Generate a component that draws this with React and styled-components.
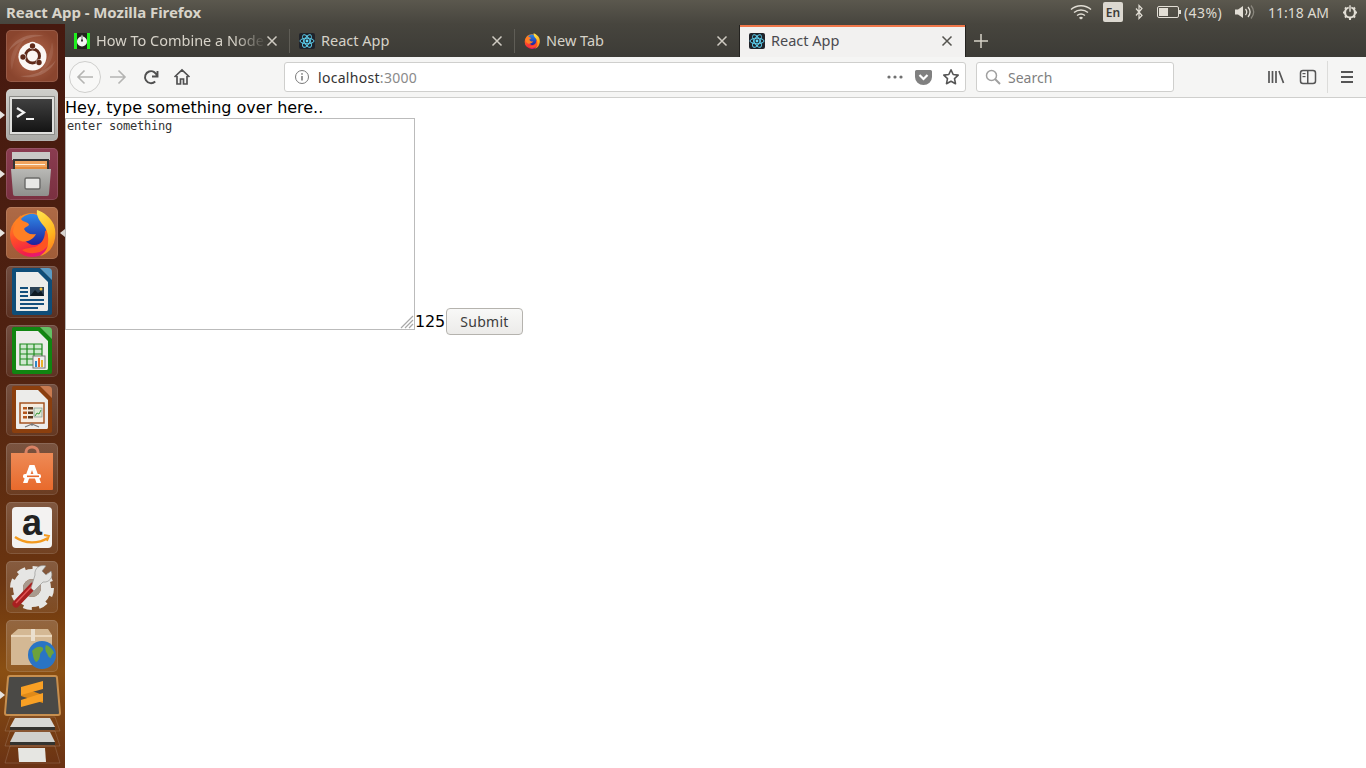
import React from "react";
import styled, { createGlobalStyle } from "styled-components";

const Global = createGlobalStyle`
  html, body { margin: 0; padding: 0; height: 100%; background: #fff; overflow: hidden; }
  #root { height: 768px; }
`;
const UI = `"Noto Sans", "Open Sans", sans-serif`;

const Screen = styled.div`
  width: 1366px; height: 768px; display: flex; flex-direction: column; overflow: hidden;
`;
const Panel = styled.header`
  height: 24px; flex: none; display: flex; align-items: center; justify-content: space-between;
  background: linear-gradient(#5b584e, #47453e);
  font-family: ${UI}; color: #dfdbd2;
`;
const WindowTitle = styled.div`
  margin-left: 6px; font-size: 15px; font-weight: 700; letter-spacing: -0.05px; color: #d8d4ca; white-space: nowrap;
`;
const Tray = styled.div`
  display: flex; align-items: center; height: 24px; font-size: 14px; color: #dfdbd2;
`;
const Glyph = styled.svg`
  display: block; flex: none; margin-left: ${p => p.$ml || 0}px; margin-right: ${p => p.$mr || 0}px;
`;
const LangBox = styled.div`
  width: 20px; height: 20px; margin-left: 11px; border-radius: 2px; background: #dcd8d0; color: #3c3b37;
  font-size: 12px; font-weight: 600; display: flex; align-items: center; justify-content: center;
`;
const TrayText = styled.span`
  margin-left: ${p => p.$ml}px; white-space: nowrap; letter-spacing: ${p => p.$ls || 0}px; width: ${p => p.$w}px;
`;
const Body = styled.div`
  flex: 1; display: flex; min-height: 0;
`;
const Dock = styled.nav`
  width: 65px; flex: none; position: relative; display: flex; flex-direction: column; align-items: flex-start;
  gap: 7px; padding: 6px 0 0 6px; box-sizing: border-box; overflow: hidden;
  background: linear-gradient(#46190f 0%, #4f2211 45%, #6b3510 75%, #8a4f12 87%, #6a3214 100%);
`;
const Tile = styled.div`
  width: 52px; height: 52px; flex: none; position: relative; border-radius: 5px; box-sizing: border-box;
  background: ${p => p.$bg || "linear-gradient(rgba(255,255,255,.2), rgba(255,255,255,.07))"};
  box-shadow: inset 0 0 0 1px rgba(255,255,255,.12);
  & > svg { display: block; }
`;
const FoxBox = styled.div`
  padding: 2px;
`;
const Pip = styled.i`
  position: absolute; top: 50%; margin-top: -4px; width: 0; height: 0;
  border-top: 4px solid transparent; border-bottom: 4px solid transparent;
  ${p => p.$right
    ? "right: -7px; border-right: 5px solid #d8d4d0;"
    : "left: -6px; border-left: 5px solid #e8e4e0;"}
`;
const FoldPip = styled(Pip)`
  top: 671px; left: 0;
`;
const DockFold = styled.svg`
  display: block; position: absolute; left: 0; top: 651px;
`;
const Browser = styled.main`
  flex: 1; min-width: 0; display: flex; flex-direction: column;
`;
const TabStrip = styled.div`
  height: 33px; flex: none; display: flex; align-items: stretch;
  background: linear-gradient(#47453e, #3c3b36);
  font-family: ${UI};
`;
const Tab = styled.div`
  width: 225px; flex: none; box-sizing: border-box; display: flex; align-items: center; padding: 1px 12px 0 9px;
  position: relative; font-size: 14.5px;
  ${p => p.$active
    ? "background:#f2f1f0;color:#4a4a4f;border-top:2px solid #f0774a;box-shadow:-1px 0 0 #23221f,1px 0 0 #23221f;margin-top:1px;padding-top:0;padding-bottom:2px;"
    : "color:#d6d2c8;"}
  ${p => p.$sep && `&::after{content:"";position:absolute;right:0;top:5px;bottom:4px;width:1px;background:#5f5d56;}`}
`;
const Favicon = styled.svg`
  width: 16px; height: 16px; flex: none; display: block;
`;
const TabTitle = styled.span`
  flex: 1; min-width: 0; margin-left: 6px; padding-bottom: 2px; white-space: nowrap; overflow: hidden;
  ${p => p.$fade && "-webkit-mask-image: linear-gradient(90deg,#000 82%,transparent 100%); mask-image: linear-gradient(90deg,#000 82%,transparent 100%);"}
`;
const CloseIcon = styled.svg`
  width: 12px; height: 12px; flex: none; display: block;
`;
const NewTab = styled.div`
  width: 32px; display: flex; align-items: center; justify-content: center;
`;
const NavBar = styled.div`
  height: 41px; flex: none; box-sizing: border-box; display: flex; align-items: center;
  background: #f5f5f4; border-bottom: 1px solid #cfcfcd; font-family: ${UI};
`;
const BackCircle = styled.div`
  width: 32px; height: 32px; flex: none; margin-left: 4px; border-radius: 50%; box-sizing: border-box;
  border: 1px solid #cfcfcd; background: #f8f8f7; display: flex; align-items: center; justify-content: center;
`;
const NavBtn = styled.svg`
  width: 18px; height: 18px; flex: none; display: block; margin-left: ${p => p.$ml}px;
`;
const Field = styled.div`
  height: 30px; flex: none; box-sizing: border-box; background: #fff; border: 1px solid #cfcfcd; border-radius: 3px;
  display: flex; align-items: center; font-size: 14px; padding-right: ${p => p.$pr || 0}px;
  width: ${p => p.$w}px; margin-left: ${p => p.$ml}px;
`;
const UrlText = styled.span`
  margin-left: 8px; color: #333; flex: 1; letter-spacing: 0.3px;
  & b { font-weight: 400; color: #8a8a8a; }
`;
const SearchText = styled.span`
  margin-left: 7px; color: #7f7f7f;
`;
const VSep = styled.div`
  width: 1px; height: 32px; flex: none; background: #dcdcda; margin-left: ${p => p.$ml}px;
`;
const Page = styled.div`
  flex: 1; background: #fff; color: #000; font-family: "DejaVu Sans", sans-serif; font-size: 16px;
`;
const Heading = styled.div`
  height: 20px; line-height: 19px; white-space: nowrap; letter-spacing: -0.03px;
`;
const FormRow = styled.div`
  display: flex; align-items: flex-start; height: 220px;
`;
const NoteWrap = styled.div`
  position: relative; width: 350px; height: 212px; flex: none;
`;
const Note = styled.textarea`
  display: block; width: 100%; height: 100%; box-sizing: border-box; margin: 0; padding: 0 1px 1px;
  border: 1px solid #bbb; resize: none; outline: none; background: #fff; color: #333;
  font-family: "DejaVu Sans Mono", monospace; font-size: 12px; letter-spacing: -0.22px; line-height: 14px;
`;
const Grip = styled.svg`
  position: absolute; right: 1px; bottom: 1px; display: block;
`;
const Count = styled.span`
  margin: 194px 0 0 0; line-height: 19px; letter-spacing: -0.2px;
`;
const Submit = styled.button`
  width: 77px; height: 27px; margin: 190px 0 0 1px; padding: 0; box-sizing: border-box;
  border: 1px solid #b5b3ae; border-radius: 4px; background: linear-gradient(#f8f8f7, #ecebe9);
  color: #3c3c3c; font-family: ${UI}; font-size: 14px; letter-spacing: 0.3px;
`;

const Close = ({ c }) => (
  <CloseIcon viewBox="0 0 12 12"><path d="M1.5 1.5l9 9M10.5 1.5l-9 9" stroke={c} strokeWidth="1.5" fill="none" /></CloseIcon>
);
const ReactFav = () => (
  <Favicon viewBox="0 0 16 16">
    <rect width="16" height="16" rx="2" fill="#20232a" />
    <g fill="none" stroke="#61dafb" strokeWidth="0.9">
      <ellipse cx="8" cy="8" rx="7" ry="2.8" />
      <ellipse cx="8" cy="8" rx="7" ry="2.8" transform="rotate(60 8 8)" />
      <ellipse cx="8" cy="8" rx="7" ry="2.8" transform="rotate(120 8 8)" />
    </g>
    <circle cx="8" cy="8" r="1.4" fill="#61dafb" />
  </Favicon>
);
const FoxGlyph = ({ s = 16 }) => (
  <Glyph width={s} height={s} viewBox="0 0 48 48">
    <defs>
      <linearGradient id={`fb${s}`} x1="0.2" y1="0" x2="0.6" y2="1">
        <stop offset="0" stopColor="#ff9a1e" /><stop offset=".5" stopColor="#ff4a2a" /><stop offset=".85" stopColor="#f01f4a" /><stop offset="1" stopColor="#e51580" />
      </linearGradient>
      <linearGradient id={`fg${s}`} x1="0.5" y1="0" x2="0.5" y2="1">
        <stop offset="0" stopColor="#2f8ae8" /><stop offset="1" stopColor="#1d219c" />
      </linearGradient>
      <linearGradient id={`ft${s}`} x1="0.3" y1="0" x2="0.6" y2="1">
        <stop offset="0" stopColor="#ffe04a" /><stop offset=".6" stopColor="#ffb41e" /><stop offset="1" stopColor="#ff7a1e" />
      </linearGradient>
    </defs>
    <circle cx="24" cy="26" r="22" fill={`url(#fb${s})`} />
    <path d="M9 18C11 9 19 4 26 5c7 1 12 8 12 16s-4 15-12 15c-7 0-14-8-17-18z" fill={`url(#fg${s})`} />
    <path d="M5 22C7 13 10 9 13 6c-1 3 0 5 2 6 3 1 6 2 6 4-2 2-4 2-5 4 2 4 6 6 12 5-3 6-10 9-15 7-5-2-8-6-8-10z" fill="#ff7f24" />
    <path d="M14 41c7 5 18 4 24-2 5-5 7-12 6-18l-7 1c0 8-4 14-10 16-5 1-9 1-13 3z" fill="#ff5a1e" opacity=".9" />
    <path d="M29 1c7 2 14 8 17 15 3 9 1 19-4 25-3 3-6 5-10 6 4-3 8-7 8-13 1-8-1-14-5-18-3-4-7-9-6-15z" fill={`url(#ft${s})`} />
  </Glyph>
);
const PowerFav = () => (
  <Favicon viewBox="0 0 16 16">
    <rect width="16" height="16" fill="#23221e" />
    <rect x="0" width="3" height="16" fill="#1fef1f" /><rect x="13" width="3" height="16" fill="#1fef1f" />
    <circle cx="8" cy="8.5" r="5" fill="#f4f4f4" />
    <rect x="7" y="1.5" width="2" height="7" fill="#333" />
    <rect x="7.4" y="2.5" width="1.2" height="4" fill="#fff" />
  </Favicon>
);

const DocIcon = ({ edge, corner, children }) => (
  <svg width="52" height="52" viewBox="0 0 52 52">
    <path d="M8 2h26l12 12v33a2 2 0 0 1-2 2H8a2 2 0 0 1-2-2V4a2 2 0 0 1 2-2z" fill={edge} />
    <path d="M34 2h8a4 4 0 0 1 4 4v8z" fill={corner} />
    <path d="M10 6h22l10 10v27a2 2 0 0 1-1 2H11a1 1 0 0 1-1-1z" fill="#ececea" />
    {children}
  </svg>
);

const DockItems = () => (
  <>
    <Tile $bg="radial-gradient(circle at 50% 50%, #b56a4e, #8a452e 75%)">
      <svg width="52" height="52" viewBox="0 0 52 52">
        <path d="M2 22C8 8 24 2 38 6 26 6 12 10 2 22zM50 30C44 44 28 50 14 46 26 46 40 42 50 30z" fill="#fff" opacity=".14" />
        <path d="M6 40C2 28 8 14 20 8 12 16 8 28 6 40zM46 12c4 12-2 26-14 32 8-8 12-20 14-32z" fill="#fff" opacity=".08" />
        <circle cx="26.500" cy="26.500" r="14" fill="#fbf7f4" />
        <circle cx="26.500" cy="26" r="7" fill="none" stroke="#5f2a1a" strokeWidth="3" />
        <circle cx="26.500" cy="15.500" r="3.800" fill="#fbf7f4" /><circle cx="26.500" cy="16" r="2.700" fill="#5f2a1a" />
        <circle cx="16.500" cy="27" r="3.800" fill="#fbf7f4" /><circle cx="17" cy="27" r="2.700" fill="#5f2a1a" />
        <circle cx="33.500" cy="33" r="3.800" fill="#fbf7f4" /><circle cx="33" cy="32.500" r="2.700" fill="#5f2a1a" />
      </svg>
    </Tile>
    <Tile $bg="linear-gradient(#cfcfcb, #a9a9a5)">
      <svg width="52" height="52" viewBox="0 0 52 52">
        <defs><linearGradient id="term" x1="0" y1="0" x2="0" y2="1"><stop offset="0" stopColor="#404040" /><stop offset="1" stopColor="#141414" /></linearGradient></defs>
        <rect x="3" y="7" width="46" height="39" rx="1" fill="#8c8c88" />
        <rect x="4" y="8" width="44" height="37" fill="#dfdfdc" />
        <rect x="6" y="10" width="40" height="33" fill="url(#term)" />
        <path d="M11 19l7 4.500-7 4.500" fill="none" stroke="#f2f2f2" strokeWidth="2.200" />
        <rect x="20" y="29" width="8" height="2" fill="#f2f2f2" />
      </svg>
      <Pip />
    </Tile>
    <Tile $bg="linear-gradient(#8a3c50, #7a3040)">
      <svg width="52" height="52" viewBox="0 0 52 52">
        <defs><linearGradient id="cab" x1="0" y1="0" x2="0" y2="1"><stop offset="0" stopColor="#b9b9b6" /><stop offset="1" stopColor="#8f8f8c" /></linearGradient></defs>
        <path d="M6 4h38v8H6z" fill="#c9c9c6" />
        <rect x="7" y="11" width="36" height="10" fill="#333" />
        <rect x="9" y="13" width="32" height="7" fill="#f0a35e" />
        <rect x="9" y="16" width="30" height="1" fill="#fff2e0" />
        <rect x="9" y="19" width="32" height="2" fill="#e58a3a" />
        <path d="M5 21h40l-2 25a2 2 0 0 1-2 2H9a2 2 0 0 1-2-2z" fill="url(#cab)" />
        <rect x="19" y="30" width="15" height="11" rx="1.500" fill="#e8e8e6" stroke="#6a6a68" strokeWidth="1.400" />
      </svg>
      <Pip />
    </Tile>
    <Tile $bg="linear-gradient(#ae6a46, #a05c38)">
      <FoxBox><FoxGlyph s={48} /></FoxBox>
      <Pip /><Pip $right />
    </Tile>
    <Tile>
      <DocIcon edge="#0f4d78" corner="#5b9bc4">
        <rect x="14" y="21" width="8" height="2" fill="#134f7c" /><rect x="14" y="25" width="8" height="2" fill="#134f7c" /><rect x="14" y="29" width="8" height="2" fill="#134f7c" />
        <rect x="14" y="33" width="24" height="2" fill="#134f7c" /><rect x="14" y="37" width="24" height="2" fill="#134f7c" /><rect x="14" y="41" width="18" height="2" fill="#134f7c" />
        <rect x="24" y="21" width="14" height="9" fill="#2d4255" /><path d="M24 30l5-6 3 3 3-2 3 5z" fill="#0e1a24" /><circle cx="35" cy="23" r="1.500" fill="#f4c040" />
      </DocIcon>
    </Tile>
    <Tile>
      <DocIcon edge="#118511" corner="#63c163">
        <path d="M14 19h22v21H14zM14 24h22M14 29h22M14 34h22M21 19v21M28 19v21" fill="#cfe8cf" stroke="#1d8a1d" strokeWidth="1.200" />
        <rect x="27" y="31" width="12" height="12" fill="#efefef" stroke="#777" />
        <rect x="29" y="36" width="2" height="6" fill="#2f86c8" /><rect x="32" y="33" width="2" height="9" fill="#e8662c" /><rect x="35" y="35" width="2" height="7" fill="#e8b22c" />
      </DocIcon>
    </Tile>
    <Tile>
      <DocIcon edge="#8b3f0e" corner="#c97b50">
        <rect x="14" y="19" width="24" height="20" fill="#f6ecdf" stroke="#a04a14" strokeWidth="1.400" />
        <rect x="17" y="23" width="4" height="2.500" fill="#b5571c" /><rect x="17" y="27.500" width="4" height="2.500" fill="#b5571c" /><rect x="17" y="32" width="4" height="2.500" fill="#b5571c" />
        <rect x="22" y="23" width="5" height="2.500" fill="#5a3a20" /><rect x="22" y="27.500" width="5" height="2.500" fill="#5a3a20" /><rect x="22" y="32" width="5" height="2.500" fill="#5a3a20" />
        <rect x="28" y="24" width="8" height="9" fill="#dfe9d4" stroke="#688" strokeWidth=".6" /><path d="M29 32l2-3 2 1 2-4" stroke="#3a9a3a" fill="none" />
        <path d="M26 39v3M26 40l-7 3M26 40l7 3" stroke="#777" strokeWidth="1.200" />
      </DocIcon>
    </Tile>
    <Tile>
      <svg width="52" height="52" viewBox="0 0 52 52">
        <defs><linearGradient id="bag" x1="0" y1="0" x2="0" y2="1"><stop offset="0" stopColor="#ee8a56" /><stop offset="1" stopColor="#e86a2c" /></linearGradient></defs>
        <path d="M20 17V9a6 5 0 0 1 12 0v8" fill="none" stroke="#d98264" strokeWidth="3" />
        <path d="M5 10h42v36a1 1 0 0 1-1 1H6a1 1 0 0 1-1-1z" fill="url(#bag)" />
        <path d="M23.500 22h5l6.500 18h-4.500l-4.500-13-4.500 13H17z" fill="#fff" />
        <rect x="17" y="31" width="18" height="4.500" rx="2" fill="#fff" /><rect x="21" y="32.500" width="12" height="1.600" fill="#e86a2c" />
      </svg>
    </Tile>
    <Tile>
      <svg width="52" height="52" viewBox="0 0 52 52">
        <rect x="6" y="5" width="40" height="41" rx="4" fill="#f3f2f1" />
        <text x="26" y="33" textAnchor="middle" fontFamily="Liberation Sans" fontWeight="700" fontSize="36" fill="#222">a</text>
        <path d="M9 35c10 7 23 7 33 1" fill="none" stroke="#f39a1e" strokeWidth="2.400" />
        <path d="M38 33l5 1-2 5" fill="none" stroke="#f39a1e" strokeWidth="1.800" />
      </svg>
    </Tile>
    <Tile>
      <svg width="52" height="52" viewBox="0 0 52 52">
        <circle cx="26" cy="27" r="19" fill="none" stroke="#e6e6e4" strokeWidth="6" strokeDasharray="8 6.920" />
        <circle cx="26" cy="27" r="14" fill="none" stroke="#e6e6e4" strokeWidth="10" />
        <circle cx="26" cy="27" r="9" fill="#a99a8e" />
        <path d="M10 43L27 25" stroke="#a82020" strokeWidth="7" strokeLinecap="round" />
        <path d="M10 42L27 24" stroke="#e05555" strokeWidth="1.500" />
        <path d="M25 27l3 3 9-9c6 1 11-5 8-11l-5 4-4-4 4-5c-7-2-12 3-11 9z" fill="#e2e2e0" stroke="#8a8a88" strokeWidth=".6" />
      </svg>
    </Tile>
    <Tile>
      <svg width="52" height="52" viewBox="0 0 52 52">
        <path d="M5 15l7-6h30l4 6v30H5z" fill="#d4b894" />
        <path d="M5 15h41v2H5z" fill="#ead7bd" /><rect x="25" y="9" width="4" height="12" fill="#eadfcf" />
        <circle cx="36" cy="35" r="14" fill="#2a74c4" />
        <path d="M26 31c4-5 9-5 11-3 1 3-3 4-3 7s-2 7-4 7c-3-3-3-8-4-11zM40 25c3 1 7 4 8 8-2 1-3 3-3 5-3 0-3-4-5-6-1-3-1-5 0-7z" fill="#6ca23b" />
      </svg>
    </Tile>
  </>
);

export default function App() {
  return (
    <Screen>
      <Global />
      <Panel>
        <WindowTitle>React App - Mozilla Firefox</WindowTitle>
        <Tray>
          <Glyph width="22" height="16" viewBox="0 0 22 16">
            <g fill="none" stroke="#e2ded5" strokeWidth="1.4">
              <path d="M1 5.500c5.500-5 14.500-5 20 0" /><path d="M4 8.500c4-3.400 10-3.400 14 0" /><path d="M7 11.500c2.400-1.800 5.600-1.800 8 0" />
            </g>
            <path d="M9 14a2.200 2.200 0 0 1 4 0l-2 1.600z" fill="#e2ded5" />
          </Glyph>
          <LangBox>En</LangBox>
          <Glyph $ml={12} width="8" height="16" viewBox="0 0 8 16"><path d="M1 4.500l6 7-3 3V1.500l3 3-6 7" fill="none" stroke="#e2ded5" strokeWidth="1.2" /></Glyph>
          <Glyph $ml={14} width="24" height="12" viewBox="0 0 24 12">
            <rect x=".5" y=".5" width="21" height="11" rx="1.500" fill="none" stroke="#e2ded5" />
            <rect x="2" y="2" width="9" height="8" fill="#e2ded5" /><rect x="22" y="4" width="2" height="4" fill="#e2ded5" />
          </Glyph>
          <TrayText $ml={3} $w={38} $ls={0.4}>(43%)</TrayText>
          <Glyph $ml={13} width="20" height="16" viewBox="0 0 20 16">
            <path d="M0 5.500h3L8 2v12l-5-3.500H0z" fill="#e2ded5" />
            <path d="M10.500 5c1.400 1.700 1.400 4.300 0 6" fill="none" stroke="#e2ded5" strokeWidth="1.3" />
            <path d="M13 3c2.500 3 2.500 7 0 10" fill="none" stroke="#e2ded5" strokeWidth="1.3" />
            <path d="M16 1.500c3.300 4 3.300 9 0 13" fill="none" stroke="#8a877e" strokeWidth="1.3" />
          </Glyph>
          <TrayText $ml={13} $w={62}>11:18 AM</TrayText>
          <Glyph $ml={12} $mr={8} width="16" height="16" viewBox="0 0 16 16">
            <circle cx="8" cy="8.500" r="5" fill="none" stroke="#e2ded5" strokeWidth="2.2" />
            <path d="M8 1v2M8 14v2M1 8.500h2M13 8.500h2M3 3.500l1.500 1.500M11.500 12l1.500 1.500M13 3.500L11.500 5M4.500 12L3 13.500" stroke="#e2ded5" strokeWidth="2" />
            <rect x="7" y="1" width="2" height="7" fill="#e2ded5" stroke="#4b4941" strokeWidth=".5" />
          </Glyph>
        </Tray>
      </Panel>
      <Body>
        <Dock>
          <DockItems />
          <DockFold width="65" height="93" viewBox="0 0 65 93">
            <path d="M10 1h45a2 2 0 0 1 2 2l3 35a2 2 0 0 1-2 2H7a2 2 0 0 1-2-2l3-35a2 2 0 0 1 2-2z" fill="#4a4946" stroke="#c78f4f" strokeWidth="2" />
            <polygon points="21,21 43,28 43,20 21,12" fill="#e08a18" />
            <polygon points="21,12 43,6 43,14 21,20" fill="#f9a024" />
            <polygon points="21,25 43,18 43,26 21,32" fill="#f9a024" />
            <g fill="none" stroke="#fff" strokeOpacity=".14">
              <path d="M10 42h45l5 14H5zM10 56h45l5 15H5zM10 71h45l5 17H5z" />
            </g>
            <path d="M15 43h35l5 9H10z" fill="#d8d8d4" /><path d="M10 52h45v3H10z" fill="#34332f" />
            <path d="M15 57h35l5 10H10z" fill="#d0d0cc" /><path d="M10 67h45v3H10z" fill="#34332f" />
            <path d="M18 73h27l1 14H19z" fill="#e6e6e2" />
          </DockFold>
          <FoldPip />
        </Dock>
        <Browser>
          <TabStrip>
            <Tab $sep><PowerFav /><TabTitle $fade>How To Combine a Node</TabTitle><Close c="#cfcbc2" /></Tab>
            <Tab $sep><ReactFav /><TabTitle>React App</TabTitle><Close c="#cfcbc2" /></Tab>
            <Tab><FoxGlyph /><TabTitle>New Tab</TabTitle><Close c="#cfcbc2" /></Tab>
            <Tab $active><ReactFav /><TabTitle>React App</TabTitle><Close c="#55544f" /></Tab>
            <NewTab>
              <svg width="14" height="14" viewBox="0 0 14 14"><path d="M7 0v14M0 7h14" stroke="#d6d2c8" strokeWidth="1.5" /></svg>
            </NewTab>
          </TabStrip>
          <NavBar>
            <BackCircle>
              <svg width="18" height="18" viewBox="0 0 18 18"><path d="M17 9H2M8.500 2.500L2 9l6.500 6.500" fill="none" stroke="#b4b4b2" strokeWidth="1.6" /></svg>
            </BackCircle>
            <NavBtn $ml={8} viewBox="0 0 18 18"><path d="M1 9h15M9.500 2.500L16 9l-6.500 6.500" fill="none" stroke="#b4b4b2" strokeWidth="1.6" /></NavBtn>
            <NavBtn $ml={15} viewBox="0 0 18 18"><path d="M15 8.500a6 6 0 1 0-1.800 5M15.500 3v5.500H10" fill="none" stroke="#505050" strokeWidth="1.9" /></NavBtn>
            <NavBtn $ml={13} viewBox="0 0 18 18"><path d="M1.500 9L9 2l7.500 7M4 8v8h3.500v-5h3v5H14V8" fill="none" stroke="#505050" strokeWidth="1.7" /></NavBtn>
            <Field $ml={93} $w={682} $pr={5}>
              <Glyph $ml={9} width="16" height="16" viewBox="0 0 16 16">
                <circle cx="8" cy="8" r="6.500" fill="none" stroke="#7a7a7a" /><rect x="7.300" y="7" width="1.400" height="4.500" fill="#6a6a6a" /><rect x="7.300" y="4.200" width="1.400" height="1.500" fill="#6a6a6a" />
              </Glyph>
              <UrlText>localhost<b>:3000</b></UrlText>
              <Glyph width="16" height="4" viewBox="0 0 16 4"><circle cx="2" cy="2" r="1.600" fill="#707070" /><circle cx="8" cy="2" r="1.600" fill="#707070" /><circle cx="14" cy="2" r="1.600" fill="#707070" /></Glyph>
              <Glyph $ml={12} width="17" height="16" viewBox="0 0 17 16">
                <path d="M1.500 1h14A1.500 1.500 0 0 1 17 2.500V8A8.500 8 0 0 1 0 8V2.500A1.500 1.500 0 0 1 1.500 1z" fill="#808080" /><path d="M4.500 6L8.500 10l4-4" fill="none" stroke="#fff" strokeWidth="2.200" />
              </Glyph>
              <Glyph $ml={10} width="18" height="18" viewBox="0 0 18 18">
                <path d="M9 1.800l2.200 4.700 5 .6-3.700 3.500 1 5.100L9 13.200l-4.500 2.500 1-5.100L1.800 7.100l5-.6z" fill="none" stroke="#555" strokeWidth="1.600" strokeLinejoin="round" />
              </Glyph>
            </Field>
            <Field $ml={10} $w={198}>
              <Glyph $ml={8} width="16" height="16" viewBox="0 0 16 16">
                <circle cx="6.500" cy="6.500" r="5" fill="none" stroke="#a0a0a0" strokeWidth="1.500" /><path d="M10 10l5 5" stroke="#a0a0a0" strokeWidth="2" />
              </Glyph>
              <SearchText>Search</SearchText>
            </Field>
            <NavBtn $ml={93} viewBox="0 0 18 18"><path d="M2 3v12M5.500 3v12M9 3v12M12 3l4.500 12" fill="none" stroke="#555" strokeWidth="1.700" /></NavBtn>
            <NavBtn $ml={14} viewBox="0 0 18 18">
              <rect x="1.500" y="2.500" width="15" height="13" rx="2.500" fill="none" stroke="#555" strokeWidth="1.500" /><rect x="8" y="3" width="1.500" height="12" fill="#555" /><rect x="3.500" y="5" width="3" height="1.200" fill="#555" /><rect x="3.500" y="8" width="3" height="1.200" fill="#555" />
            </NavBtn>
            <VSep $ml={10} />
            <NavBtn $ml={10} viewBox="0 0 18 18"><path d="M3 4h12M3 9h12M3 14h12" stroke="#555" strokeWidth="1.800" /></NavBtn>
          </NavBar>
          <Page>
            <Heading>Hey, type something over here..</Heading>
            <FormRow>
              <NoteWrap>
                <Note defaultValue="enter something" />
                <Grip width="14" height="14" viewBox="0 0 14 14">
                  <path d="M13 1L1 13M13 5L5 13M13 9L9 13" stroke="#a8a8a8" strokeWidth="1.200" />
                </Grip>
              </NoteWrap>
              <Count>125</Count>
              <Submit>Submit</Submit>
            </FormRow>
          </Page>
        </Browser>
      </Body>
    </Screen>
  );
}
